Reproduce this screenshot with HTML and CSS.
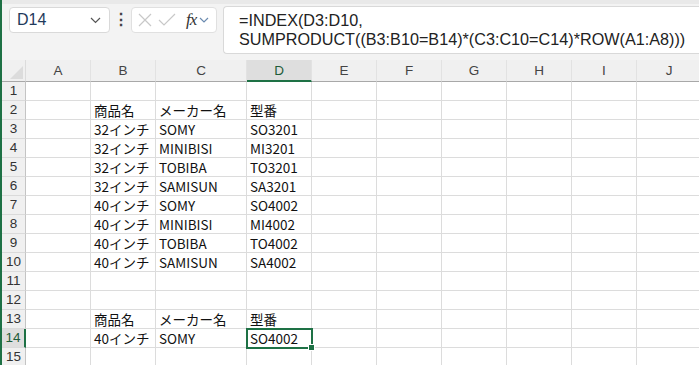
FILE: index.html
```html
<!DOCTYPE html>
<html lang="ja">
<head>
    <meta charset="UTF-8">
    <title>Excel - INDEX SUMPRODUCT</title>
    <link rel="stylesheet" href="styles.css">
</head>
<body>
    <div class="app">
        <div class="toolbar">
            <div class="namebox">
                <span class="name">D14</span>
                <svg class="chev" width="11" height="7" viewBox="0 0 11 7"><path d="M1 1 L5.5 5.5 L10 1" fill="none" stroke="#555" stroke-width="1.2"/></svg>
            </div>
            <div class="dots">⋮</div>
            <div class="fxbox">
                <svg width="14" height="14" viewBox="0 0 14 14"><path d="M1 1 L13 13 M13 1 L1 13" stroke="#c8c8c8" stroke-width="1.2"/></svg>
                <svg width="18" height="14" viewBox="0 0 18 14"><path d="M1 7 L6 12 L17 1" fill="none" stroke="#c8c8c8" stroke-width="1.2"/></svg>
                <span class="fx">fx</span>
                <svg width="10" height="7" viewBox="0 0 10 7"><path d="M1 1 L5 5 L9 1" fill="none" stroke="#6b8bb0" stroke-width="1.2"/></svg>
            </div>
            <div class="formula">=INDEX(D3:D10,<br>SUMPRODUCT((B3:B10=B14)*(C3:C10=C14)*ROW(A1:A8)))</div>
        </div>

        <div class="sheet" id="sheet"></div>
    </div>

    <script>
        let cols = ["A", "B", "C", "D", "E", "F", "G", "H", "I", "J"];
        let data = {
            2: ["", "商品名", "メーカー名", "型番"],
            3: ["", "32インチ", "SOMY", "SO3201"],
            4: ["", "32インチ", "MINIBISI", "MI3201"],
            5: ["", "32インチ", "TOBIBA", "TO3201"],
            6: ["", "32インチ", "SAMISUN", "SA3201"],
            7: ["", "40インチ", "SOMY", "SO4002"],
            8: ["", "40インチ", "MINIBISI", "MI4002"],
            9: ["", "40インチ", "TOBIBA", "TO4002"],
            10: ["", "40インチ", "SAMISUN", "SA4002"],
            13: ["", "商品名", "メーカー名", "型番"],
            14: ["", "40インチ", "SOMY", "SO4002"]
        };
        let sheet = document.getElementById("sheet");

        let head = document.createElement("div");
        head.className = "row head";
        let html = '<div class="rh corner"><span class="tri"></span></div>';
        for (let c of cols) {
            let cls = "ch col-" + c + (c == "D" ? " active" : "");
            html += `<div class="${cls}">${c}</div>`;
        }
        head.innerHTML = html;
        sheet.appendChild(head);

        for (let r = 1; r <= 15; r++) {
            let row = document.createElement("div");
            row.className = "row";
            let vals = data[r] || [];
            let h = `<div class="rh${r == 14 ? " active" : ""}">${r}</div>`;
            for (let i = 0; i < cols.length; i++) {
                let sel = (r == 14 && cols[i] == "D") ? " selected" : "";
                h += `<div class="cell col-${cols[i]}${sel}">${vals[i] || ""}${sel ? '<span class="handle"></span>' : ""}</div>`;
            }
            row.innerHTML = h;
            sheet.appendChild(row);
        }
    </script>
</body>
</html>
```

FILE: styles.css
```css
body {
    margin: 0;
    background: #fff;
    overflow: hidden;
}
.app {
    width: 699px;
    height: 365px;
    border-left: 2px solid #1e7145;
    box-sizing: border-box;
    overflow: hidden;
}
.toolbar {
    height: 60px;
    background: #f3f3f3;
    border-top: 4px solid #e9e9e9;
    box-sizing: border-box;
    display: flex;
    align-items: flex-start;
    padding-top: 3px;
    font-family: "Liberation Sans", Arial, sans-serif;
}
.namebox {
    margin-left: 7px;
    width: 101px;
    height: 26px;
    background: #fff;
    border: 1px solid #d9d9d9;
    border-radius: 4px;
    box-sizing: border-box;
    display: flex;
    align-items: center;
    justify-content: space-between;
    padding: 0 8px 0 7px;
}
.name {
    font-size: 16px;
    color: #1f3a5c;
}
.dots {
    width: 21px;
    text-align: center;
    font-size: 16px;
    line-height: 26px;
    color: #444;
    font-weight: bold;
}
.fxbox {
    width: 86px;
    height: 26px;
    background: #fff;
    border: 1px solid #e0e0e0;
    border-radius: 4px;
    box-sizing: border-box;
    display: flex;
    align-items: center;
    padding-left: 6px;
    gap: 6px;
}
.fx {
    font-family: "Liberation Serif", "Times New Roman", serif;
    font-style: italic;
    font-size: 17px;
    color: #333;
    margin-left: 4px;
    margin-right: -3px;
    letter-spacing: -1px;
}
.formula {
    margin-left: 6px;
    flex: 1;
    height: 48px;
    background: #fff;
    border: 1px solid #d9d9d9;
    border-right: none;
    border-radius: 4px 0 0 4px;
    box-sizing: border-box;
    padding: 4px 0 0 15px;
    font-size: 16.2px;
    line-height: 19px;
    color: #222;
    white-space: nowrap;
    margin-top: -1px;
}
.sheet {
    font-family: "Noto Sans CJK JP", "Noto Sans", sans-serif;
}
.row {
    display: flex;
    height: 19px;
}
.row.head {
    height: 22px;
    background: #f0f0f0;
}
.rh {
    width: 24px;
    flex: none;
    background: #f0f0f0;
    border-right: 1px solid #c4c4c4;
    border-bottom: 1px solid #dadada;
    box-sizing: border-box;
    font-size: 13.5px;
    line-height: 18px;
    color: #333;
    text-align: center;
    font-family: "Liberation Sans", Arial, sans-serif;
}
.rh.active {
    background: #dedede;
    border-right: 2px solid #1e7145;
    color: #1e5c3a;
}
.corner {
    position: relative;
    border-bottom: 1px solid #a8a8a8;
    border-right: 1px solid #dcdcdc;
}
.tri {
    position: absolute;
    right: 2px;
    bottom: 2px;
    width: 0;
    height: 0;
    border-left: 13px solid transparent;
    border-bottom: 13px solid #dcdcdc;
}
.ch, .cell {
    flex: none;
    width: 65px;
    box-sizing: border-box;
    border-right: 1px solid #dcdcdc;
}
.col-C {
    width: 91px;
}
.ch {
    border-bottom: 1px solid #a8a8a8;
    text-align: center;
    font-family: "Liberation Sans", Arial, sans-serif;
    font-size: 13.5px;
    line-height: 22px;
    color: #444;
    border-right-color: #e2e2e2;
}
.ch.active {
    background: #dedede;
    border-bottom: 2px solid #1e7145;
    color: #1e5c3a;
    line-height: 21px;
}
.cell {
    border-bottom: 1px solid #dcdcdc;
    font-size: 13.5px;
    line-height: 18px;
    padding-left: 3px;
    color: #111;
    white-space: nowrap;
    position: relative;
}
.cell.selected {
    outline: 2px solid #1e7145;
    outline-offset: -1px;
    z-index: 1;
}
.handle {
    position: absolute;
    right: -4px;
    bottom: -4px;
    width: 5px;
    height: 5px;
    background: #1e7145;
    border: 1px solid #fff;
}
```
